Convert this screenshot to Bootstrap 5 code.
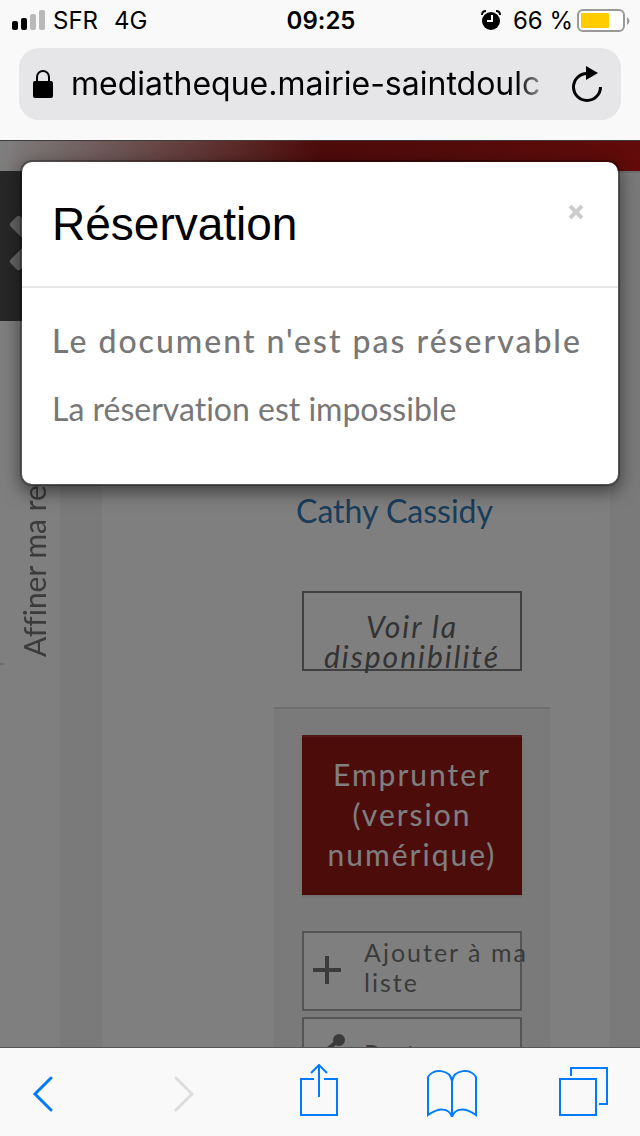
<!DOCTYPE html>
<html lang="fr">
<head>
<meta charset="utf-8">
<meta name="viewport" content="width=device-width, initial-scale=1">
<title>Médiathèque - Réservation</title>
<link href="https://cdn.jsdelivr.net/npm/bootstrap@5.3.0/dist/css/bootstrap.min.css" rel="stylesheet">
<style>
  body { font-family: Lato, sans-serif; font-variant-ligatures: none; background: #fff; color: #777; }
  svg { display: block; flex: none; }
  .chrome { background: #f9f9f9; font-family: Inter, sans-serif; color: #000; }
  .status { height: 40px; padding: 0 10px 0 12px; font-size: 24px; line-height: 40px; }
  .status span, .status time { padding-top: 2px; }
  .side { flex: 1 1 0; }
  .address { height: 72px; margin: 8px 19px 20px; padding: 0 18px 0 14px; border-radius: 20px; background: #e6e6e8; }
  .address input { margin: 0 26px 0 18px; font-size: 32px; color: #000; -webkit-mask-image: linear-gradient(90deg, #000 94%, transparent 102%); mask-image: linear-gradient(90deg, #000 94%, transparent 102%); }
  .banner { height: 31px; border-top: 1px solid #777; background: linear-gradient(100deg, #fff 0, #9b1714 50%, #a81815 72%, #c51715 100%); }
  .filters { width: 60px; flex: none; }
  .filters button { height: 150px; padding: 0 0 6px 9px; background: #4e4e4e; border: 0; }
  .filters a { height: 336px; padding-right: 11px; writing-mode: vertical-rl; transform: rotate(180deg); font-size: 30px; line-height: 46px; color: #777; }
  .filters hr { width: 4px; height: 2px; margin: 6px 0; background: #ddd; border: 0; opacity: 1; }
  .gutter { min-width: 0; background: #f4f4f4; border-top: 2px solid #ddd; padding: 0 30px 0 42px; }
  .record { padding: 318px 60px 0 172px; }
  .author { margin-left: 22px; font-size: 32px; line-height: 40px; color: #337ab7; text-decoration: none; }
  .tracked { letter-spacing: 2px; }
  .stock { height: 80px; margin: 60px 28px 36px; padding: 18px 0 0; border: 2px solid #808080; background: none; color: #666; font-size: 30px; line-height: 30px; font-style: italic; }
  .actions { padding: 26px 28px; border-top: 2px solid #ddd; background: #f4f4f4; }
  .borrow { height: 160px; margin-bottom: 36px; padding: 0 0 4px; border: 0; border-top: 2px solid #a32c2a; background: #991815; color: #fff; font-size: 30px; line-height: 40px; box-shadow: 0 2px 2px #ddd; }
  .option { min-width: 0; height: 80px; margin-bottom: 6px; padding: 0 0 2px 8px; border: 2px solid #aaa; background: #fff; color: #777; font-size: 25px; line-height: 30px; }
  .option svg { width: 52px; }
  .option span { width: 0; padding-bottom: 6px; white-space: nowrap; }
  .shade { background: rgba(0, 0, 0, .5); padding: 20px; }
  .dialog { border: 2px solid rgba(0, 0, 0, .3); border-radius: 12px; background: #fff; background-clip: padding-box; box-shadow: 0 6px 18px rgba(0, 0, 0, .5); }
  .dialog-head { padding: 30px; border-bottom: 2px solid #e5e5e5; }
  .dialog-head h1 { font: 46px/64px "Liberation Sans", sans-serif; color: #000; }
  .dialog-head button { margin-top: 10px; padding: 3px 4px; border: 0; background: none; }
  .dialog-body { padding: 33px 28px 55px 30px; }
  .dialog-body h2 { margin: 0 0 28px; font-size: 32px; line-height: 40px; font-weight: 500; letter-spacing: 2px; white-space: nowrap; }
  .dialog-body p { margin: 0; font-size: 32px; line-height: 40px; }
  .bottom { border-top: 1px solid #555; }
  .tools { display: grid; grid-template-columns: 141fr 126fr 127fr 132fr 49px; height: 88px; padding: 0 32px 4px; }
  .tools button { padding: 0; border: 0; background: none; }
</style>
</head>
<body>
<div class="d-flex flex-column vh-100 overflow-hidden">
  <header class="chrome flex-shrink-0">
    <div class="status d-flex align-items-center">
      <div class="side d-flex align-items-center">
        <svg width="33" height="20" aria-hidden="true"><rect y="11" width="6" height="9" rx="2"/><rect x="9" y="8" width="6" height="12" rx="2"/><rect x="18" y="4" width="6" height="16" rx="2" fill="#b9b9b9"/><rect x="27" width="6" height="20" rx="2" fill="#b9b9b9"/></svg>
        <span class="ms-2">SFR</span><span class="ms-3">4G</span>
      </div>
      <time class="fw-semibold">09:25</time>
      <div class="side d-flex align-items-center justify-content-end">
        <svg class="me-2" width="20" height="20" aria-hidden="true"><circle cx="10" cy="11" r="9"/><path d="M1 5Q1 1 5 1M19 5Q19 1 15 1" fill="none" stroke="#000" stroke-width="2"/><path d="M11 5v6H6" fill="none" stroke="#fff" stroke-width="2"/></svg>
        <span class="ms-1 me-1">66&nbsp;%</span>
        <svg width="53" height="23" aria-hidden="true"><rect x="1" y="1" width="46" height="21" rx="5" fill="#fff" stroke="#999" stroke-width="2"/><rect x="4" y="4" width="28" height="15" rx="1" fill="#fc0"/><path d="M50 8q5 4 0 8z" fill="#999"/></svg>
      </div>
    </div>
    <div class="address d-flex align-items-center">
      <svg width="20" height="28" aria-hidden="true"><rect y="11" width="20" height="17" rx="2"/><path d="M4 12V7a6 6 0 0 1 12 0v5" fill="none" stroke="#000" stroke-width="2"/></svg>
      <input class="form-control border-0 bg-transparent shadow-none p-0" type="text" aria-label="Adresse" value="mediatheque.mairie-saintdoulc">
      <button class="btn p-0 border-0" type="button" aria-label="Actualiser"><svg width="32" height="36"><path d="M29.500 21A13.500 13.500 0 1 1 16 7.500" fill="none" stroke="#000" stroke-width="3"/><path d="M15 0v14l12-7z"/></svg></button>
    </div>
  </header>

  <main class="position-relative flex-fill overflow-hidden">
    <div class="banner"></div>
    <div class="d-flex h-100">
      <aside class="filters d-flex flex-column">
        <button class="d-flex align-items-center" type="button" aria-label="Fermer les filtres"><svg width="56" height="56" fill="#ccc"><rect x="-5" y="21" width="66" height="14" rx="3" transform="rotate(45 28 28)"/><rect x="-5" y="21" width="66" height="14" rx="3" transform="rotate(-45 28 28)"/></svg></button>
        <a class="text-decoration-none" href="#filtres">Affiner ma recherche</a>
        <hr>
      </aside>
      <div class="gutter flex-fill">
        <section class="record bg-white h-100">
          <a class="author d-block text-nowrap" href="#auteur">Cathy Cassidy</a>
          <div class="d-flex"><button class="stock tracked flex-fill" type="button">Voir la<br>disponibilité</button></div>
          <div class="actions d-flex flex-column">
            <button class="borrow tracked" type="button">Emprunter<br>(version<br>numérique)</button>
            <button class="option tracked d-flex align-items-center text-start" type="button"><svg width="52" height="32"><path d="M15 2v28M1 16h28" stroke="#777" stroke-width="4"/></svg><span>Ajouter à ma<br>liste</span></button>
            <button class="option tracked d-flex align-items-center text-start" type="button"><svg width="52" height="44"><path d="M27 6L7 22l20 16" fill="none" stroke="#777" stroke-width="4"/><circle cx="27" cy="6" r="6" fill="#777"/><circle cx="7" cy="22" r="6" fill="#777"/><circle cx="27" cy="38" r="6" fill="#777"/></svg><span>Partager</span></button>
          </div>
        </section>
      </div>
    </div>

    <div class="shade position-absolute top-0 start-0 w-100 h-100">
      <div class="dialog" role="dialog" aria-modal="true" aria-labelledby="dialog-title">
        <div class="dialog-head d-flex justify-content-between align-items-start">
          <h1 class="m-0" id="dialog-title">Réservation</h1>
          <button type="button" aria-label="Fermer"><svg width="16" height="14"><path d="M2 1l12 12M14 1L2 13" stroke="#ccc" stroke-width="4"/></svg></button>
        </div>
        <div class="dialog-body">
          <h2>Le document n'est pas réservable</h2>
          <p>La réservation est impossible</p>
        </div>
      </div>
    </div>
  </main>

  <footer class="chrome bottom flex-shrink-0">
    <nav class="tools align-items-center" aria-label="Navigation">
      <button class="me-auto" type="button" aria-label="Précédent"><svg width="21" height="52"><path d="M19 14L3 30l16 16" fill="none" stroke="#007aff" stroke-width="3" stroke-linecap="round"/></svg></button>
      <button class="me-auto" type="button" aria-label="Suivant" disabled><svg width="21" height="52"><path d="M3 14l16 16L3 46" fill="none" stroke="#ddd" stroke-width="3" stroke-linecap="round"/></svg></button>
      <button class="me-auto" type="button" aria-label="Partager la page"><svg width="38" height="52"><path d="M14 15H1v36h36V15H24M19 33V1M11 9l8-8 8 8" fill="none" stroke="#007aff" stroke-width="2"/></svg></button>
      <button class="me-auto" type="button" aria-label="Signets"><svg width="50" height="54"><path d="M25 18C23 6 6 5 1 14v38C11 45 22 44 25 54C28 44 39 45 49 52V14C44 5 27 6 25 18v34" fill="none" stroke="#007aff" stroke-width="2"/></svg></button>
      <button class="me-auto" type="button" aria-label="Onglets"><svg width="49" height="52"><path d="M1 15h36v36H1zM12 12V4h36v36h-8" fill="none" stroke="#007aff" stroke-width="2"/></svg></button>
    </nav>
  </footer>
</div>
<script src="https://cdn.jsdelivr.net/npm/bootstrap@5.3.0/dist/js/bootstrap.bundle.min.js"></script>
</body>
</html>
